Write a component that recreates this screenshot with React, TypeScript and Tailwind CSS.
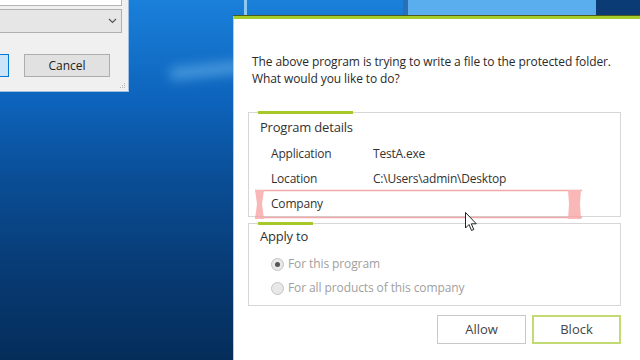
import React from 'react';

const font = { fontFamily: '"Open Sans", "Noto Sans", sans-serif' };

const Radio: React.FC<{ checked?: boolean; label: string }> = ({ checked, label }) => (
  <div className="flex items-center h-[24px]">
    <span className="w-[13px] h-[13px] rounded-full border border-[#c4c4c4] bg-[#e8e8e8] flex items-center justify-center">
      {checked && <span className="w-[5px] h-[5px] rounded-full bg-[#555]" />}
    </span>
    <span className="ml-[4px] text-[12px] tracking-[-0.1px] text-[#a0a0a0]">{label}</span>
  </div>
);

const DetailRow: React.FC<{ label: string; value?: string }> = ({ label, value }) => (
  <div className="flex items-center h-[25px] text-[12px] tracking-[-0.2px] text-[#333]">
    <span className="w-[102px]">{label}</span>
    <span>{value}</span>
  </div>
);

const App: React.FC = () => {
  return (
    <div
      className="relative w-[640px] h-[360px] overflow-hidden bg-[linear-gradient(to_bottom,#1a80da_0%,#0d63bb_28%,#0a4d95_50%,#073b74_75%,#052d5a_100%)]"
      style={font}
    >
      {/* wallpaper light beams */}
      <div className="absolute left-[170px] top-[64px] w-[80px] h-[12px] bg-[#6fb8ee] opacity-60 blur-[6px] -rotate-6" />
      <div className="absolute left-[244px] top-0 w-[3px] h-[20px] bg-[#8cc8f2]" />
      <div className="absolute left-[403px] top-0 w-[5px] h-[20px] bg-[#2a6fb8]" />
      <div className="absolute left-[408px] top-0 w-[188px] h-[20px] bg-[#5aaeee]" />
      <div className="absolute left-[596px] top-0 w-[44px] h-[20px] bg-[#0b3b75]" />

      {/* background window, top left */}
      <div className="absolute left-0 top-0 w-[129px] h-[92px] bg-[#f0f0f0] border-r border-b border-[#9fc0e4]">
        <div className="w-[122px] h-[6px] bg-white border-b border-r border-[#b5b5b5]" />
        <div className="mt-[3px] w-[122px] h-[24px] bg-[#e6e6e6] border border-l-0 border-[#b0b0b0] flex items-center justify-end pr-[4px]">
          <svg width="9" height="6" viewBox="0 0 9 6">
            <path d="M1 1l3.5 3.5L8 1" fill="none" stroke="#555" strokeWidth="1.2" />
          </svg>
        </div>
        <div className="mt-[21px] flex items-center gap-[15px]">
          <div className="w-[9px] h-[23px] bg-[#cce4f7] border border-l-0 border-[#0078d7]" />
          <div className="w-[86px] h-[23px] bg-[#e1e1e1] border border-[#adadad] flex items-center justify-center text-[12px] text-[#222]">
            Cancel
          </div>
        </div>
        <svg className="absolute right-[2px] bottom-[2px]" width="7" height="7" viewBox="0 0 7 7">
          <g fill="#b8b8b8">
            <rect x="5" y="1" width="1" height="1" />
            <rect x="3" y="3" width="1" height="1" />
            <rect x="5" y="3" width="1" height="1" />
            <rect x="1" y="5" width="1" height="1" />
            <rect x="3" y="5" width="1" height="1" />
            <rect x="5" y="5" width="1" height="1" />
          </g>
        </svg>
      </div>

      {/* main dialog */}
      <div className="absolute left-[233px] top-[16px] w-[430px] h-[360px] bg-white border-t-[3px] border-[#a4cc2c] border-l border-l-[#c8c8c8] shadow-[0_-1px_0_#4d5a1a]">
        <div className="pl-[18px] pt-[34px] text-[12px] leading-[17px] tracking-[-0.1px] text-[#2a2a2a]">
          <p>The above program is trying to write a file to the protected folder.</p>
          <p>What would you like to do?</p>
        </div>

        <div className="ml-[14px] mt-[25px] w-[373px] flex flex-col gap-[6px]">
          {/* Program details */}
          <div className="relative h-[105px] border border-[#d6d6d6] pl-[11px]">
            <div className="absolute left-[9px] top-[-2px] w-[95px] h-[3px] bg-[#a6c828]" />
            <div className="pt-[2px] h-[27px] flex items-center text-[13px] tracking-[-0.2px] text-[#333]">Program details</div>
            <div className="pl-[11px] pt-[1px]">
              <DetailRow label="Application" value="TestA.exe" />
              <DetailRow label="Location" value="C:\Users\admin\Desktop" />
              <DetailRow label="Company" />
            </div>
          </div>

          {/* Apply to */}
          <div className="relative h-[83px] border border-[#d6d6d6] pl-[11px]">
            <div className="absolute left-[9px] top-[-2px] w-[55px] h-[3px] bg-[#a6c828]" />
            <div className="pt-[2px] h-[24px] flex items-center text-[13px] tracking-[-0.2px] text-[#333]">Apply to</div>
            <div className="pl-[11px] pt-[4px]">
              <Radio checked label="For this program" />
              <Radio label="For all products of this company" />
            </div>
          </div>

          {/* buttons */}
          <div className="mt-[3px] flex justify-end gap-[6px]">
            <button className="w-[89px] h-[29px] border border-[#c9c9c9] bg-white text-[13px] text-[#444]">Allow</button>
            <button className="w-[89px] h-[29px] border-2 border-[#c2da74] bg-white text-[13px] text-[#444]">Block</button>
          </div>
        </div>
      </div>

      {/* red marker annotation */}
      <svg className="absolute left-0 top-0 pointer-events-none" width="640" height="360">
        <g opacity="0.75">
          <line x1="255" y1="190.5" x2="582" y2="190.5" stroke="#f08a8a" strokeWidth="1.5" />
          <line x1="255" y1="217.5" x2="582" y2="217.5" stroke="#f08a8a" strokeWidth="1.5" />
          <path d="M255 190 L264 190 L262 204 L264 219 L255 219 L257 204 Z" fill="#f7a0a0" />
          <path d="M568 190 L581 190 L580 204 L581 219 L568 219 L569 204 Z" fill="#f7a0a0" />
        </g>
      </svg>

      {/* mouse cursor */}
      <svg className="absolute left-[465px] top-[212px]" width="13" height="20" viewBox="0 0 13 20">
        <path d="M0.5 0.5 L0.5 16 L4 12.5 L6.5 18.5 L8.8 17.5 L6.3 11.8 L11.3 11.8 Z" fill="#fff" stroke="#222" strokeWidth="1" strokeLinejoin="round" />
      </svg>
    </div>
  );
};

export default App;
